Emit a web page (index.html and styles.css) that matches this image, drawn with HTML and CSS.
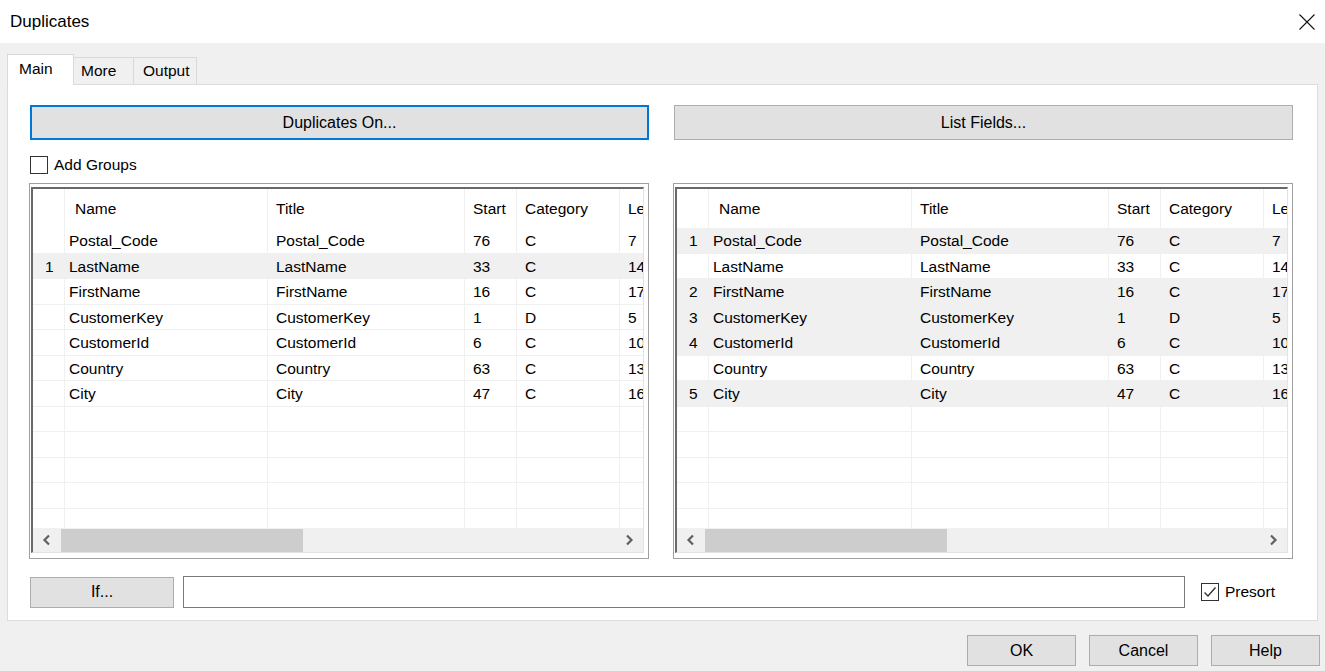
FILE: index.html
```html
<!DOCTYPE html>
<html>
<head>
<meta charset="utf-8">
<title>Duplicates</title>
<link rel="stylesheet" href="styles.css">
</head>
<body>
<div class="titlebar">
  <span class="title">Duplicates</span>
  <svg class="close" width="16" height="16" viewBox="0 0 16 16"><path d="M0.5 0.5 L15.5 15.5 M15.5 0.5 L0.5 15.5" stroke="#111" stroke-width="1.1" fill="none"/></svg>
</div>
<div class="tabs">
  <div class="tab tab-active">Main</div>
  <div class="tab">More</div>
  <div class="tab">Output</div>
</div>
<div class="panel">
  <div class="cols">
    <button class="btn btn-wide btn-focus area-b1">Duplicates On...</button>
    <button class="btn btn-wide area-b2">List Fields...</button>
    <label class="check area-c1"><span class="box"></span><span>Add Groups</span></label>

    <div class="dgv area-g1">
      <div class="dgv-inner">
        <div class="viewport">
          <div class="row head"><div class="c rh"></div><div class="c nm">Name</div><div class="c">Title</div><div class="c">Start</div><div class="c">Category</div><div class="c">Length</div></div>
          <div class="row"><div class="c rh"></div><div class="c nm">Postal_Code</div><div class="c">Postal_Code</div><div class="c">76</div><div class="c">C</div><div class="c">7</div></div>
          <div class="row hl"><div class="c rh">1</div><div class="c nm">LastName</div><div class="c">LastName</div><div class="c">33</div><div class="c">C</div><div class="c">14</div></div>
          <div class="row"><div class="c rh"></div><div class="c nm">FirstName</div><div class="c">FirstName</div><div class="c">16</div><div class="c">C</div><div class="c">17</div></div>
          <div class="row"><div class="c rh"></div><div class="c nm">CustomerKey</div><div class="c">CustomerKey</div><div class="c">1</div><div class="c">D</div><div class="c">5</div></div>
          <div class="row"><div class="c rh"></div><div class="c nm">CustomerId</div><div class="c">CustomerId</div><div class="c">6</div><div class="c">C</div><div class="c">10</div></div>
          <div class="row"><div class="c rh"></div><div class="c nm">Country</div><div class="c">Country</div><div class="c">63</div><div class="c">C</div><div class="c">13</div></div>
          <div class="row"><div class="c rh"></div><div class="c nm">City</div><div class="c">City</div><div class="c">47</div><div class="c">C</div><div class="c">16</div></div>
          <div class="row"><div class="c rh"></div><div class="c nm"></div><div class="c"></div><div class="c"></div><div class="c"></div><div class="c"></div></div>
          <div class="row"><div class="c rh"></div><div class="c nm"></div><div class="c"></div><div class="c"></div><div class="c"></div><div class="c"></div></div>
          <div class="row"><div class="c rh"></div><div class="c nm"></div><div class="c"></div><div class="c"></div><div class="c"></div><div class="c"></div></div>
          <div class="row"><div class="c rh"></div><div class="c nm"></div><div class="c"></div><div class="c"></div><div class="c"></div><div class="c"></div></div>
          <div class="row"><div class="c rh"></div><div class="c nm"></div><div class="c"></div><div class="c"></div><div class="c"></div><div class="c"></div></div>
        </div>
        <div class="hscroll">
          <span class="arrow"><svg width="10" height="12" viewBox="0 0 10 12"><path d="M7 1.5 L2.5 6 L7 10.5" stroke="#606060" stroke-width="2.2" fill="none"/></svg></span>
          <span class="thumb"></span>
          <span class="track"></span>
          <span class="arrow"><svg width="10" height="12" viewBox="0 0 10 12"><path d="M3 1.5 L7.5 6 L3 10.5" stroke="#606060" stroke-width="2.2" fill="none"/></svg></span>
        </div>
      </div>
    </div>

    <div class="dgv area-g2">
      <div class="dgv-inner">
        <div class="viewport">
          <div class="row head"><div class="c rh"></div><div class="c nm">Name</div><div class="c">Title</div><div class="c">Start</div><div class="c">Category</div><div class="c">Length</div></div>
          <div class="row hl"><div class="c rh">1</div><div class="c nm">Postal_Code</div><div class="c">Postal_Code</div><div class="c">76</div><div class="c">C</div><div class="c">7</div></div>
          <div class="row"><div class="c rh"></div><div class="c nm">LastName</div><div class="c">LastName</div><div class="c">33</div><div class="c">C</div><div class="c">14</div></div>
          <div class="row hl"><div class="c rh">2</div><div class="c nm">FirstName</div><div class="c">FirstName</div><div class="c">16</div><div class="c">C</div><div class="c">17</div></div>
          <div class="row hl"><div class="c rh">3</div><div class="c nm">CustomerKey</div><div class="c">CustomerKey</div><div class="c">1</div><div class="c">D</div><div class="c">5</div></div>
          <div class="row hl"><div class="c rh">4</div><div class="c nm">CustomerId</div><div class="c">CustomerId</div><div class="c">6</div><div class="c">C</div><div class="c">10</div></div>
          <div class="row"><div class="c rh"></div><div class="c nm">Country</div><div class="c">Country</div><div class="c">63</div><div class="c">C</div><div class="c">13</div></div>
          <div class="row hl"><div class="c rh">5</div><div class="c nm">City</div><div class="c">City</div><div class="c">47</div><div class="c">C</div><div class="c">16</div></div>
          <div class="row"><div class="c rh"></div><div class="c nm"></div><div class="c"></div><div class="c"></div><div class="c"></div><div class="c"></div></div>
          <div class="row"><div class="c rh"></div><div class="c nm"></div><div class="c"></div><div class="c"></div><div class="c"></div><div class="c"></div></div>
          <div class="row"><div class="c rh"></div><div class="c nm"></div><div class="c"></div><div class="c"></div><div class="c"></div><div class="c"></div></div>
          <div class="row"><div class="c rh"></div><div class="c nm"></div><div class="c"></div><div class="c"></div><div class="c"></div><div class="c"></div></div>
          <div class="row"><div class="c rh"></div><div class="c nm"></div><div class="c"></div><div class="c"></div><div class="c"></div><div class="c"></div></div>
        </div>
        <div class="hscroll">
          <span class="arrow"><svg width="10" height="12" viewBox="0 0 10 12"><path d="M7 1.5 L2.5 6 L7 10.5" stroke="#606060" stroke-width="2.2" fill="none"/></svg></span>
          <span class="thumb"></span>
          <span class="track"></span>
          <span class="arrow"><svg width="10" height="12" viewBox="0 0 10 12"><path d="M3 1.5 L7.5 6 L3 10.5" stroke="#606060" stroke-width="2.2" fill="none"/></svg></span>
        </div>
      </div>
    </div>
  </div>

  <div class="bottom">
    <button class="btn btn-if">If...</button>
    <div class="input"></div>
    <label class="check check-presort"><span class="box"><svg width="16" height="16" viewBox="0 0 16 16"><path d="M2.5 8.5 L6 12 L13.5 3.5" stroke="#333" stroke-width="1.4" fill="none"/></svg></span><span>Presort</span></label>
  </div>
</div>
<div class="footer">
  <button class="btn btn-foot">OK</button>
  <button class="btn btn-foot">Cancel</button>
  <button class="btn btn-foot">Help</button>
</div>
</body>
</html>
```

FILE: styles.css
```css
* { box-sizing: border-box; }

body {
  margin: 0;
  width: 1325px;
  height: 671px;
  overflow: hidden;
  background: #f0f0f0;
  font-family: "Liberation Sans", Arial, sans-serif;
  font-size: 15.5px;
  color: #000;
}

.titlebar {
  height: 43px;
  background: #fff;
  display: flex;
  align-items: center;
  justify-content: space-between;
  padding: 0 10px 0 10px;
}
.title { font-size: 17px; }
.close { display: block; margin-top: 1px; }

.tabs {
  display: flex;
  align-items: flex-end;
  height: 41px;
  padding-left: 7px;
}
.tab {
  height: 27px;
  line-height: 26px;
  border: 1px solid #d9d9d9;
  border-bottom: none;
  border-left: none;
  background: #f0f0f0;
  padding-left: 7px;
  font-size: 15.5px;
}
.tab:nth-child(2) { width: 60px; }
.tab:nth-child(3) { width: 63px; padding-left: 9px; }
.tab-active {
  position: relative;
  z-index: 1;
  width: 67px;
  height: 31px;
  margin-bottom: -1px;
  line-height: 28px;
  background: #fff;
  border-left: 1px solid #d9d9d9;
  padding-left: 11px;
}

.panel {
  margin: 0 7px;
  height: 537px;
  background: #fff;
  border: 1px solid #dcdcdc;
  padding: 20px 23px 0 21px;
}

.cols {
  display: grid;
  grid-template-columns: 621px 621px;
  column-gap: 23px;
  grid-template-areas:
    "b1 b2"
    "c1 ."
    "g1 g2";
}
.area-b1 { grid-area: b1; }
.area-b2 { grid-area: b2; }
.area-c1 { grid-area: c1; }
.area-g1 { grid-area: g1; }
.area-g2 { grid-area: g2; }

.btn {
  font-family: "Liberation Sans", Arial, sans-serif;
  font-size: 16px;
  color: #000;
  background: #e1e1e1;
  border: 1px solid #adadad;
  padding: 0;
  margin: 0;
}
.btn-wide {
  height: 35px;
  width: 619px;
  margin-left: 1px;
}
.btn-focus {
  border: 2px solid #0078d7;
}

.check {
  display: flex;
  align-items: center;
  gap: 6px;
  font-size: 15.5px;
}
.area-c1 {
  margin: 16px 0 9px 1px;
  height: 18px;
}
.box {
  width: 18px;
  height: 18px;
  border: 1px solid #333;
  background: #fff;
  display: flex;
  align-items: center;
  justify-content: center;
}

.dgv {
  width: 620px;
  height: 376px;
  border: 1px solid #a0a0a0;
  padding: 3px 4px 5px 1px;
  background: #fff;
}
.dgv-inner {
  height: 100%;
  border-top: 2px solid #696969;
  border-left: 2px solid #696969;
  border-right: 1px solid #e3e3e3;
  border-bottom: 1px solid #e3e3e3;
  display: flex;
  flex-direction: column;
}
.viewport {
  flex: 1;
  overflow: hidden;
}
.row {
  display: grid;
  grid-template-columns: 32px 203px 197px 52px 103px 80px;
  height: 25.5px;
  background: #fff;
}
.row.hl { background: #f0f0f0; }
.row.head { height: 39px; }
.c {
  border-right: 1px solid #f0f0f0;
  border-bottom: 1px solid #f0f0f0;
  padding-left: 8px;
  padding-top: 1px;
  line-height: 24px;
  white-space: nowrap;
  overflow: hidden;
}
.c.rh { padding-left: 12px; }
.c.nm { padding-left: 4px; }
.head .c {
  line-height: 38px;
  border-bottom: none;
}
.head .c.nm { padding-left: 10px; }

.hscroll {
  height: 24px;
  background: #f0f0f0;
  display: flex;
  align-items: center;
  flex: none;
}
.arrow {
  width: 28px;
  height: 24px;
  display: flex;
  align-items: center;
  justify-content: center;
}
.thumb {
  width: 242px;
  height: 23px;
  background: #cdcdcd;
}
.track { flex: 1; }

.bottom {
  display: flex;
  align-items: center;
  margin-top: 17px;
  padding-left: 1px;
}
.btn-if {
  width: 144px;
  height: 31px;
}
.input {
  width: 1002px;
  height: 32px;
  margin-left: 9px;
  border: 1px solid #7a7a7a;
  background: #fff;
}
.check-presort {
  margin-left: 16px;
}

.footer {
  display: flex;
  justify-content: flex-end;
  gap: 13px;
  padding: 14px 5px 0 0;
}
.btn-foot {
  width: 109px;
  height: 31px;
}
```
